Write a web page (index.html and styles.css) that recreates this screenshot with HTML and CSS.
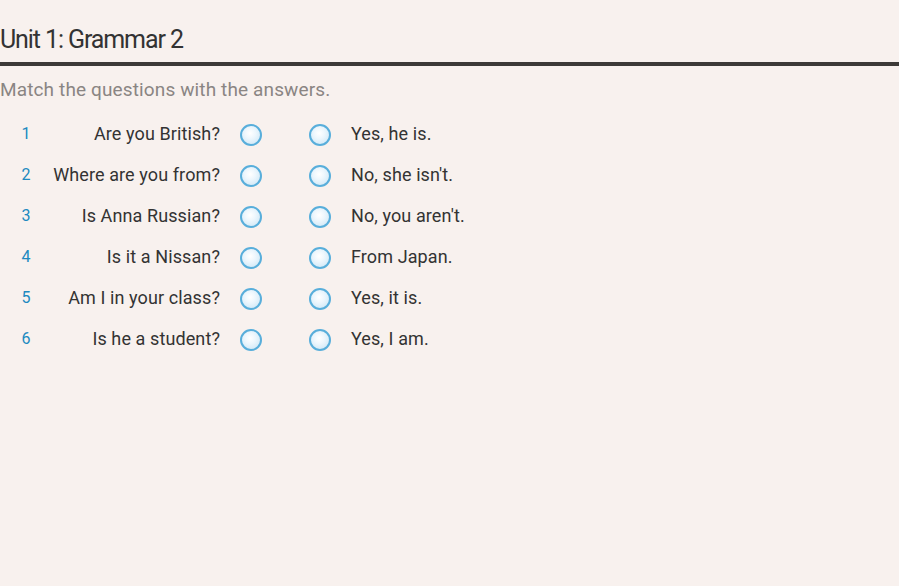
FILE: index.html
```html
<!DOCTYPE html>
<html lang="en">
<head>
<meta charset="utf-8">
<title>Unit 1: Grammar 2</title>
<link rel="stylesheet" href="styles.css">
</head>
<body>
<div class="page">
  <h1 class="title">Unit 1: Grammar 2</h1>
  <p class="instructions">Match the questions with the answers.</p>
  <div class="match">
    <div class="row"><span class="num">1</span><span class="q">Are you British?</span><span class="dot"></span><span class="dot dot-right"></span><span class="a">Yes, he is.</span></div>
    <div class="row"><span class="num">2</span><span class="q">Where are you from?</span><span class="dot"></span><span class="dot dot-right"></span><span class="a">No, she isn't.</span></div>
    <div class="row"><span class="num">3</span><span class="q">Is Anna Russian?</span><span class="dot"></span><span class="dot dot-right"></span><span class="a">No, you aren't.</span></div>
    <div class="row"><span class="num">4</span><span class="q">Is it a Nissan?</span><span class="dot"></span><span class="dot dot-right"></span><span class="a">From Japan.</span></div>
    <div class="row"><span class="num">5</span><span class="q">Am I in your class?</span><span class="dot"></span><span class="dot dot-right"></span><span class="a">Yes, it is.</span></div>
    <div class="row"><span class="num">6</span><span class="q">Is he a student?</span><span class="dot"></span><span class="dot dot-right"></span><span class="a">Yes, I am.</span></div>
  </div>
</div>
</body>
</html>
```
FILE: styles.css
```css
html, body {
  margin: 0;
  padding: 0;
  background: #f8f1ee;
}
body {
  font-family: Roboto, "Liberation Sans", sans-serif;
  color: #333;
  width: 899px;
  height: 586px;
  overflow: hidden;
}
.title {
  margin: 0;
  padding: 24px 0 0 0;
  height: 38px;
  font-size: 25px;
  font-weight: 400;
  letter-spacing: -1.1px;
  line-height: 32px;
  color: #333;
  border-bottom: 4px solid #3d3a38;
}
.instructions {
  margin: 0;
  padding-top: 11px;
  font-size: 19px;
  line-height: 26px;
  letter-spacing: 0.13px;
  color: #8a8583;
}
.match {
  display: grid;
  grid-template-columns: 52px 168px auto auto 1fr;
  justify-content: start;
  padding-top: 10px;
}
.row {
  display: contents;
}
.num, .q, .a, .dot {
  align-self: center;
}
.num {
  text-align: center;
  color: #2089c0;
  font-size: 16px;
  font-weight: 400;
  line-height: 41px;
}
.q, .a {
  font-size: 18px;
  line-height: 41px;
  letter-spacing: 0.1px;
  color: #333;
  white-space: nowrap;
}
.q {
  text-align: right;
}
.dot {
  width: 22px;
  height: 22px;
  box-sizing: border-box;
  border-radius: 50%;
  border: 2px solid #58aedb;
  background: radial-gradient(circle at 45% 40%, #ffffff 0%, #eef7fd 35%, #c6e3f4 100%);
  margin-top: 2px;
  margin-left: 20px;
}
.dot-right {
  margin-left: 47px;
}
.a {
  margin-left: 20px;
}
```
